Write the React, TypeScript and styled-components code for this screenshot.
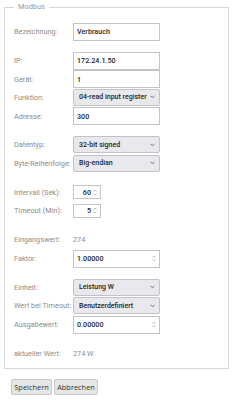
import React from "react";
import styled, { createGlobalStyle } from "styled-components";

const GlobalStyle = createGlobalStyle`
  html, body { margin: 0; padding: 0; background: #fff; }
  body { font-family: Roboto, "Liberation Sans", sans-serif; }
`;

const Page = styled.div`
  padding: 0 0 0 4px;
  width: 225px;
`;

const Fieldset = styled.fieldset`
  box-sizing: border-box;
  width: 225px;
  margin: 0;
  border: 1px solid #d6d6d6;
  padding: 8.5px 9px 6.5px 9px;
  min-inline-size: 0;
`;

const Legend = styled.legend`
  padding: 0 4px;
  margin-left: 0;
  font-size: 7.4px;
  line-height: 14px;
  color: #9a9a9a;
`;

const Form = styled.div`
  display: flex;
  flex-direction: column;
  gap: 12px;
`;

const Group = styled.div`
  display: flex;
  flex-direction: column;
  gap: 1.5px;
`;

const Row = styled.div`
  display: grid;
  grid-template-columns: 59px 1fr;
  align-items: center;
  height: 17px;
`;

const Label = styled.span`
  font-size: 7.3px;
  color: #8c8c8c;
  white-space: nowrap;
`;

const Value = styled.span`
  font-size: 7.3px;
  color: #8c8c8c;
`;

const Field = styled.div<{ $w?: number; $h?: number }>`
  position: relative;
  box-sizing: border-box;
  width: ${(p) => p.$w ?? 87}px;
  height: ${(p) => p.$h ?? 18}px;
  border: 1px solid #c4c4c4;
  background: #fff;
  display: flex;
  align-items: center;
  padding: 0 3px;
  font-size: 7.2px;
  font-weight: 500;
  color: #2a2a2a;
`;

const NumField = styled(Field)<{ $right?: boolean }>`
  justify-content: ${(p) => (p.$right ? "flex-end" : "flex-start")};
  padding-right: ${(p) => (p.$right ? 9 : 3)}px;
`;

const Select = styled.div`
  position: relative;
  box-sizing: border-box;
  width: 87px;
  height: 17px;
  border: 1px solid #c2c2c8;
  border-radius: 2px;
  background: #e9e9ed;
  display: flex;
  align-items: center;
  padding: 0 11px 0 5px;
  font-size: 7px;
  font-weight: 500;
  color: #1e1e1e;
  white-space: nowrap;
  overflow: hidden;
`;

const Chevron = styled.svg`
  position: absolute;
  right: 4px;
  top: 50%;
  margin-top: -2px;
`;

const Spin = styled.svg`
  position: absolute;
  right: 3px;
  top: 50%;
  margin-top: -3.5px;
`;

const Buttons = styled.div`
  display: flex;
  gap: 2px;
  margin: 10px 0 0 7px;
`;

const Button = styled.button<{ $w: number }>`
  box-sizing: border-box;
  width: ${(p) => p.$w}px;
  height: 16px;
  padding: 0;
  border: 1px solid #c8c8c8;
  border-radius: 2px;
  background: #e6e6e6;
  font-family: "Open Sans", Roboto, sans-serif;
  font-size: 7.4px;
  color: #333;
`;

const ChevronIcon = () => (
  <Chevron width="5" height="4" viewBox="0 0 5 4">
    <path d="M0.6 0.8 L2.5 2.8 L4.4 0.8" fill="none" stroke="#555" strokeWidth="0.8" />
  </Chevron>
);

const SpinIcon = () => (
  <Spin width="4" height="7" viewBox="0 0 4 7">
    <path d="M0.5 2.6 L2 1 L3.5 2.6" fill="none" stroke="#aaa" strokeWidth="0.7" />
    <path d="M0.5 4.4 L2 6 L3.5 4.4" fill="none" stroke="#aaa" strokeWidth="0.7" />
  </Spin>
);

const SelectBox = ({ children }: { children: React.ReactNode }) => (
  <Select>
    {children}
    <ChevronIcon />
  </Select>
);

export default function App() {
  return (
    <>
      <GlobalStyle />
      <Page>
        <Fieldset>
          <Legend>Modbus</Legend>
          <Form>
            <Group>
              <Row>
                <Label>Bezeichnung:</Label>
                <Field>Verbrauch</Field>
              </Row>
            </Group>
            <Group>
              <Row>
                <Label>IP:</Label>
                <Field>172.24.1.50</Field>
              </Row>
              <Row>
                <Label>Gerät:</Label>
                <Field>1</Field>
              </Row>
              <Row>
                <Label>Funktion:</Label>
                <SelectBox>04-read input register</SelectBox>
              </Row>
              <Row>
                <Label>Adresse:</Label>
                <Field>300</Field>
              </Row>
            </Group>
            <Group>
              <Row>
                <Label>Datentyp:</Label>
                <SelectBox>32-bit signed</SelectBox>
              </Row>
              <Row>
                <Label>Byte-Reihenfolge:</Label>
                <SelectBox>Big-endian</SelectBox>
              </Row>
            </Group>
            <Group>
              <Row>
                <Label>Intervall (Sek):</Label>
                <NumField $w={28} $h={14} $right>
                  60
                  <SpinIcon />
                </NumField>
              </Row>
              <Row>
                <Label>Timeout (Min):</Label>
                <NumField $w={28} $h={14} $right>
                  5
                  <SpinIcon />
                </NumField>
              </Row>
            </Group>
            <Group>
              <Row>
                <Label>Eingangswert:</Label>
                <Value>274</Value>
              </Row>
              <Row>
                <Label>Faktor:</Label>
                <NumField>
                  1.00000
                  <SpinIcon />
                </NumField>
              </Row>
            </Group>
            <Group>
              <Row>
                <Label>Einheit:</Label>
                <SelectBox>Leistung W</SelectBox>
              </Row>
              <Row>
                <Label>Wert bei Timeout:</Label>
                <SelectBox>Benutzerdefiniert</SelectBox>
              </Row>
              <Row>
                <Label>Ausgabewert:</Label>
                <NumField>
                  0.00000
                  <SpinIcon />
                </NumField>
              </Row>
            </Group>
            <Group>
              <Row>
                <Label>aktueller Wert:</Label>
                <Value>274 W</Value>
              </Row>
            </Group>
          </Form>
        </Fieldset>
        <Buttons>
          <Button $w={41}>Speichern</Button>
          <Button $w={44}>Abbrechen</Button>
        </Buttons>
      </Page>
    </>
  );
}
